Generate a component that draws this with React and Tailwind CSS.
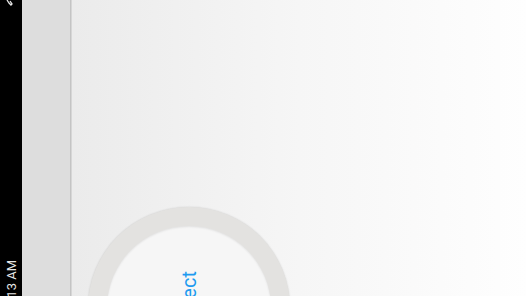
import React from 'react';

const App = () => {
  return (
    <div className="w-[526px] h-[296px] flex overflow-hidden bg-white" style={{ fontFamily: 'Roboto, "Noto Sans", sans-serif' }}>
      {/* Status bar (rotated) */}
      <div className="w-[22px] h-full bg-black flex flex-col justify-between items-center shrink-0">
        <svg width="22" height="8" viewBox="0 0 22 8" className="shrink-0">
          <path d="M7 0 L9 3 L11 5 L12 4 L10 1" stroke="#e8e8e8" strokeWidth="1.3" fill="none" />
        </svg>
        <span className="[writing-mode:vertical-rl] rotate-180 text-[13px] leading-none text-[#e6e6e6] mb-[-19px] whitespace-nowrap">
          12:13 AM
        </span>
      </div>

      {/* Side strip */}
      <div className="w-[48px] h-full bg-[#dddddd] shrink-0" />
      <div className="w-px h-full bg-[#c4c4c4] shrink-0" />
      <div className="w-px h-full bg-[#d6d6d6] shrink-0" />

      {/* Main */}
      <div className="flex-1 h-full bg-gradient-to-r from-[#ebebeb] via-[#f6f6f6] to-[#fefefe] pt-[207px] pl-[16px]">
        <div className="w-[202px] h-[202px] rounded-full bg-[#e3e2e0] shadow-[0_0_2px_rgba(0,0,0,0.15)] flex items-center justify-center shrink-0">
          <div className="w-[164px] h-[164px] rounded-full bg-[#f6f6f6] shadow-[inset_0_1px_2px_rgba(0,0,0,0.08)] flex items-center justify-center">
            <span className="[writing-mode:vertical-rl] rotate-180 text-[20px] leading-none text-[#1e9bf0] whitespace-nowrap">
              Connect
            </span>
          </div>
        </div>
      </div>
    </div>
  );
};

export default App;
